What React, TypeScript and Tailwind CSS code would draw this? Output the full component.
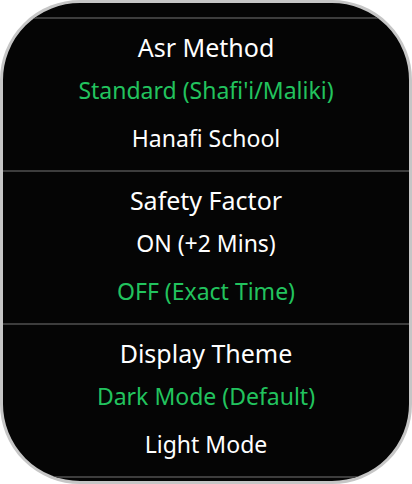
import React from 'react';

type Section = {
  title: string;
  options: { label: string; active: boolean }[];
};

const sections: Section[] = [
  {
    title: 'Asr Method',
    options: [
      { label: "Standard (Shafi'i/Maliki)", active: true },
      { label: 'Hanafi School', active: false },
    ],
  },
  {
    title: 'Safety Factor',
    options: [
      { label: 'ON (+2 Mins)', active: false },
      { label: 'OFF (Exact Time)', active: true },
    ],
  },
  {
    title: 'Display Theme',
    options: [
      { label: 'Dark Mode (Default)', active: true },
      { label: 'Light Mode', active: false },
    ],
  },
];

export default function App() {
  return (
    <div className="w-[412px] h-[484px] bg-white" style={{ fontFamily: '"Noto Sans", "Open Sans", sans-serif' }}>
      <div className="w-full h-full bg-[#050505] border-[3px] border-[#c6c6c6] rounded-[80px] overflow-hidden">
        <div className="h-[14px]" />
        {sections.map((s) => (
          <section key={s.title} className="border-t-2 border-[#3d3d3d] pt-[10px] pb-[8px]">
            <div className="h-[37px] flex items-center justify-center text-white text-[25px]">{s.title}</div>
            {s.options.map((o) => (
              <div
                key={o.label}
                className={`h-[48px] flex items-center justify-center text-[23px] ${
                  o.active ? 'text-[#22c35e]' : 'text-white'
                }`}
              >
                {o.label}
              </div>
            ))}
          </section>
        ))}
        <div className="border-t-2 border-[#3d3d3d]" />
      </div>
    </div>
  );
}
